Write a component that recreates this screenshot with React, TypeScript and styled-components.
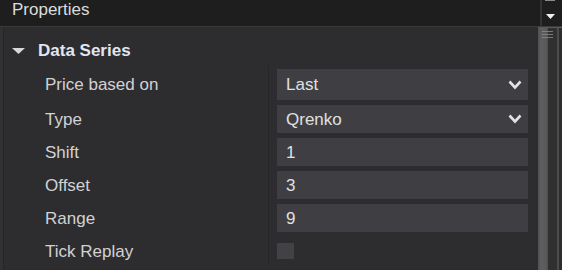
import React from "react";
import styled, { createGlobalStyle } from "styled-components";

const Global = createGlobalStyle`
  html, body { margin: 0; padding: 0; background: #2d2d30; }
  body { font-family: "Liberation Sans", Arial, sans-serif; }
`;

const Panel = styled.div`
  width: 562px;
  height: 270px;
  display: grid;
  grid-template-rows: 27px 1fr;
  overflow: hidden;
  background: #2d2d30;
`;

const Header = styled.div`
  display: flex;
  background: #1e1e1e;
  border-bottom: 1px solid #3a3a3c;
`;

const Title = styled.div`
  flex: 1;
  padding-left: 12px;
  font-size: 17px;
  line-height: 19px;
  color: #dcdcdc;
`;

const HeaderScroll = styled.div`
  width: 22px;
  border-left: 2px solid #333335;
  position: relative;
  display: flex;
  justify-content: flex-start;
  padding-left: 4px;
  box-sizing: border-box;
`;

const TopTick = styled.div`
  position: absolute;
  top: 0;
  left: 3px;
  width: 10px;
  height: 1px;
  background: #8a8a8a;
`;

const Body = styled.div`
  display: flex;
  min-height: 0;
`;

const Content = styled.div`
  flex: 1;
  border-left: 3px solid #313134;
  box-shadow: inset 1px 0 0 #262628;
`;

const GroupRow = styled.div`
  display: flex;
  align-items: center;
  gap: 13px;
  padding: 14px 0 5px 9px;
  font-size: 17px;
  line-height: 19px;
  font-weight: bold;
  color: #e2e6ee;
`;

const Row = styled.div`
  display: grid;
  grid-template-columns: 265px 1fr;
`;

const Label = styled.div<{ $first?: boolean }>`
  display: flex;
  align-items: center;
  padding: ${(p) => (p.$first ? "4px" : "5px")} 0 0 42px;
  font-size: 17px;
  line-height: 19px;
  color: #d2d2d2;
`;

const ValueCell = styled.div<{ $first?: boolean }>`
  border-left: 1px solid #262628;
  padding: ${(p) => (p.$first ? "4px" : "5px")} 10px 0 8px;
  display: flex;
  align-items: center;
`;

const Field = styled.div<{ $tall?: boolean }>`
  flex: 1;
  height: ${(p) => (p.$tall ? "31px" : "28px")};
  background: #3e3e43;
  display: flex;
  align-items: center;
  justify-content: space-between;
  padding: 0 6px 0 9px;
  box-sizing: border-box;
  font-size: 17px;
  line-height: 19px;
  color: #e0e0e0;
`;

const CheckRow = styled.div`
  height: 28px;
  display: flex;
  align-items: center;
`;

const Check = styled.div`
  width: 17px;
  height: 16px;
  background: #414146;
`;

const Scroll = styled.div`
  width: 24px;
  display: flex;
`;

const Thumb = styled.div`
  flex: 1;
  position: relative;
  border-top: 1px solid #5c5c5c;
  background: linear-gradient(
    to right,
    #505052 0px,
    #5e5e5e 3px,
    #5a5a5a 8px,
    #4c4c4c 10px,
    #303031 10px,
    #303031 19px,
    #4c4c4e 19px,
    #4c4c4e 21px,
    #2d2d30 21px
  );
`;

const Grip = styled.div`
  position: absolute;
  left: 4px;
  top: 3px;
  width: 11px;
  height: 7px;
  background: repeating-linear-gradient(
    to bottom,
    #8a8a8a 0px,
    #8a8a8a 1px,
    transparent 1px,
    transparent 3px
  );
  opacity: 0.8;
`;

const HeaderCaret = styled.svg`
  margin-top: 14px;
`;

const Chevron = () => (
  <svg width="14" height="10" viewBox="0 0 14 10">
    <polyline points="1.5,1.5 7,7.5 12.5,1.5" fill="none" stroke="#e2e2e2" strokeWidth="2.6" />
  </svg>
);

const Caret = () => (
  <svg width="13" height="6" viewBox="0 0 13 6">
    <polygon points="0,0 13,0 6.5,6" fill="#d8d8d8" />
  </svg>
);

type Prop = { label: string; value?: string; select?: boolean; check?: boolean };

const props: Prop[] = [
  { label: "Price based on", value: "Last", select: true },
  { label: "Type", value: "Qrenko", select: true },
  { label: "Shift", value: "1" },
  { label: "Offset", value: "3" },
  { label: "Range", value: "9" },
  { label: "Tick Replay", check: true },
];

export default function App() {
  return (
    <>
      <Global />
      <Panel>
        <Header>
          <Title>Properties</Title>
          <HeaderScroll>
            <TopTick />
            <HeaderCaret width="9" height="5" viewBox="0 0 9 5">
              <polygon points="0,0 9,0 4.5,5" fill="#f0f0f0" />
            </HeaderCaret>
          </HeaderScroll>
        </Header>
        <Body>
          <Content>
            <GroupRow>
              <Caret />
              <span>Data Series</span>
            </GroupRow>
            {props.map((p, i) => (
              <Row key={p.label}>
                <Label $first={i === 0}>{p.label}</Label>
                <ValueCell $first={i === 0}>
                  {p.check ? (
                    <CheckRow>
                      <Check />
                    </CheckRow>
                  ) : (
                    <Field $tall={i === 0}>
                      <span>{p.value}</span>
                      {p.select && <Chevron />}
                    </Field>
                  )}
                </ValueCell>
              </Row>
            ))}
          </Content>
          <Scroll>
            <Thumb>
              <Grip />
            </Thumb>
          </Scroll>
        </Body>
      </Panel>
    </>
  );
}
